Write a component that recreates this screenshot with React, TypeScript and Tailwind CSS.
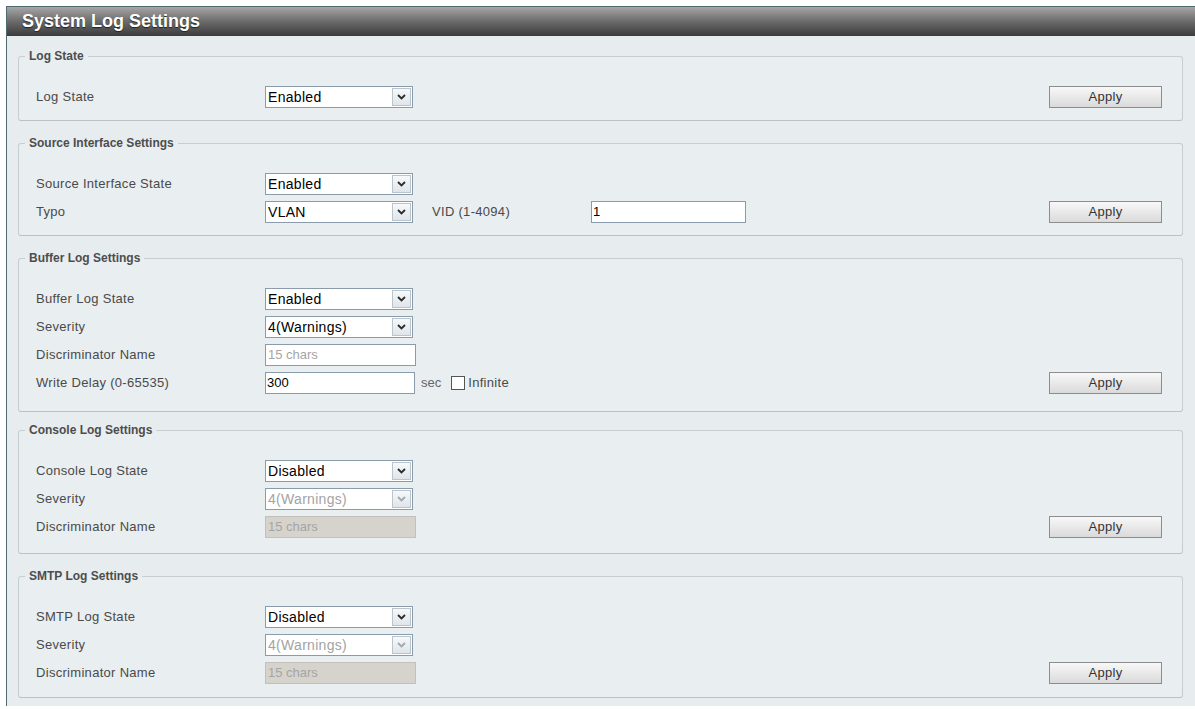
import React from 'react';

const font = "font-['Liberation_Sans',Arial,sans-serif]";

function Chevron({ disabled }: { disabled?: boolean }) {
  return (
    <svg width="9" height="6" viewBox="0 0 9 6">
      <path d="M1 1 L4.5 4.5 L8 1" fill="none" stroke={disabled ? '#a0a8b0' : '#2b2b2b'} strokeWidth="1.8" />
    </svg>
  );
}

function Select({ value, disabled }: { value: string; disabled?: boolean }) {
  return (
    <div className="flex h-[22px] w-[148px] items-center border border-[#8a9cab] bg-white">
      <span className={`flex-1 pl-[2px] text-[14px] leading-none tracking-[0.3px] ${disabled ? 'text-[#a3a3a3]' : 'text-black'}`}>{value}</span>
      <span className="mr-[1px] flex h-[18px] w-[19px] items-center justify-center border border-[#b9c4cc] bg-gradient-to-b from-[#f7f9fa] to-[#dfe5ea]">
        <Chevron disabled={disabled} />
      </span>
    </div>
  );
}

function TextBox({ value, placeholder, disabled, width }: { value?: string; placeholder?: string; disabled?: boolean; width: string }) {
  return (
    <div className={`flex h-[22px] items-center border ${width} ${disabled ? 'border-[#c2c0b8] bg-[#d6d3cc]' : 'border-[#8a9cab] bg-white'}`}>
      {value ? (
        <span className="pl-[1px] text-[13px] text-black">{value}</span>
      ) : (
        <span className="pl-[2px] text-[13px] text-[#a5a5a5]">{placeholder}</span>
      )}
    </div>
  );
}

function ApplyButton() {
  return (
    <button className="ml-auto mr-[20px] h-[22px] w-[113px] border border-[#8d8d8d] bg-gradient-to-b from-[#f8f8f8] to-[#dadada] text-[13px] tracking-[0.3px] text-[#333]">
      Apply
    </button>
  );
}

function Row({ label, children, apply }: { label: string; children: React.ReactNode; apply?: boolean }) {
  return (
    <div className="flex h-[28px] items-center">
      <div className="w-[229px] text-[13px] tracking-[0.3px] text-[#4a4a4a]">{label}</div>
      {children}
      {apply && <ApplyButton />}
    </div>
  );
}

function Section({ title, className, children }: { title: string; className: string; children: React.ReactNode }) {
  return (
    <fieldset className={`${className} w-[1165px] rounded-[3px] border border-[#c6ced1] border-b-[#b9c2c6] bg-[#e9eef0]`}>
      <legend className="ml-[6px] px-[4px] text-[12px] font-bold leading-4 text-[#4d4d4d]">{title}</legend>
      <div className="pl-[17px] pt-[19px]">{children}</div>
    </fieldset>
  );
}

export default function App() {
  return (
    <div className={`min-h-screen bg-white pt-[6px] ${font}`}>
      <div className="ml-[6px] border-l border-t border-[#4f6a70] bg-[#e7ecee] pb-[8px]">
        <div className="flex h-[29px] items-center bg-gradient-to-b from-[#a6a6a6] via-[#6b6b6b] to-[#3c3c3c] pl-[15px]">
          <span className="text-[18px] font-bold text-white [text-shadow:0_1px_1px_#222]">System Log Settings</span>
        </div>

        <div className="px-[11px]">
          <Section title="Log State" className="mt-[12px] pb-[9px]">
            <Row label="Log State" apply>
              <Select value="Enabled" />
            </Row>
          </Section>

          <Section title="Source Interface Settings" className="mt-[14px] pb-[9px]">
            <Row label="Source Interface State">
              <Select value="Enabled" />
            </Row>
            <Row label="Typo" apply>
              <Select value="VLAN" />
              <span className="ml-[19px] w-[159px] text-[13px] tracking-[0.3px] text-[#4a4a4a]">VID (1-4094)</span>
              <TextBox value="1" width="w-[155px]" />
            </Row>
          </Section>

          <Section title="Buffer Log Settings" className="mt-[14px] pb-[14px]">
            <Row label="Buffer Log State">
              <Select value="Enabled" />
            </Row>
            <Row label="Severity">
              <Select value="4(Warnings)" />
            </Row>
            <Row label="Discriminator Name">
              <TextBox placeholder="15 chars" width="w-[151px]" />
            </Row>
            <Row label="Write Delay (0-65535)" apply>
              <TextBox value="300" width="w-[150px]" />
              <span className="ml-[6px] text-[13px] text-[#666]">sec</span>
              <span className="ml-[10px] h-[14px] w-[14px] border border-[#555] bg-white" />
              <span className="ml-[3px] text-[13px] tracking-[0.3px] text-[#4a4a4a]">Infinite</span>
            </Row>
          </Section>

          <Section title="Console Log Settings" className="mt-[10px] pb-[12px]">
            <Row label="Console Log State">
              <Select value="Disabled" />
            </Row>
            <Row label="Severity">
              <Select value="4(Warnings)" disabled />
            </Row>
            <Row label="Discriminator Name" apply>
              <TextBox placeholder="15 chars" disabled width="w-[151px]" />
            </Row>
          </Section>

          <Section title="SMTP Log Settings" className="mt-[14px] pb-[10px]">
            <Row label="SMTP Log State">
              <Select value="Disabled" />
            </Row>
            <Row label="Severity">
              <Select value="4(Warnings)" disabled />
            </Row>
            <Row label="Discriminator Name" apply>
              <TextBox placeholder="15 chars" disabled width="w-[151px]" />
            </Row>
          </Section>
        </div>
      </div>
    </div>
  );
}
